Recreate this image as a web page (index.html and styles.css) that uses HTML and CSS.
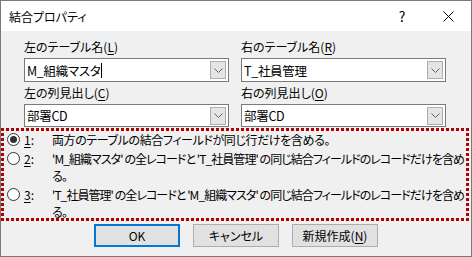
FILE: index.html
```html
<!DOCTYPE html>
<html>
  <head>
    <title>結合プロパティ</title>
    <link rel="stylesheet" href="styles.css">
  </head>
  <body>
    <div class="dialog">
      <div class="titlebar">
        <span class="title">結合プロパティ</span>
        <span class="tbtn">?</span>
        <span class="tbtn">
          <svg width="11" height="11" viewBox="0 0 11 11"><path d="M0.5 0.5 L10.5 10.5 M10.5 0.5 L0.5 10.5" stroke="#000" stroke-width="1" fill="none"/></svg>
        </span>
      </div>
      <div class="content">
        <div class="fields">
          <div class="label">左のテーブル名(<u>L</u>)</div>
          <div class="label">右のテーブル名(<u>R</u>)</div>
          <div class="combo">
            <span class="value">M_組織マスタ<span class="caret"></span></span>
            <span class="drop"><svg width="9" height="5" viewBox="0 0 9 5"><path d="M0.5 0.5 L4.5 4.5 L8.5 0.5" stroke="#606060" fill="none"/></svg></span>
          </div>
          <div class="combo">
            <span class="value">T_社員管理</span>
            <span class="drop"><svg width="9" height="5" viewBox="0 0 9 5"><path d="M0.5 0.5 L4.5 4.5 L8.5 0.5" stroke="#606060" fill="none"/></svg></span>
          </div>
          <div class="label">左の列見出し(<u>C</u>)</div>
          <div class="label">右の列見出し(<u>O</u>)</div>
          <div class="combo short">
            <span class="value">部署CD</span>
            <span class="drop"><svg width="9" height="5" viewBox="0 0 9 5"><path d="M0.5 0.5 L4.5 4.5 L8.5 0.5" stroke="#606060" fill="none"/></svg></span>
          </div>
          <div class="combo short">
            <span class="value">部署CD</span>
            <span class="drop"><svg width="9" height="5" viewBox="0 0 9 5"><path d="M0.5 0.5 L4.5 4.5 L8.5 0.5" stroke="#606060" fill="none"/></svg></span>
          </div>
        </div>

        <div class="joins">
          <div class="option">
            <span class="radio checked"></span>
            <span class="key"><u>1</u>:</span>
            <span class="desc">両方のテーブルの結合フィールドが同じ行だけを含める。</span>
          </div>
          <div class="option">
            <span class="radio"></span>
            <span class="key"><u>2</u>:</span>
            <span class="desc long">'M_組織マスタ' の全レコードと 'T_社員管理' の同じ結合フィールドのレコードだけを含め<br>る。</span>
          </div>
          <div class="option">
            <span class="radio"></span>
            <span class="key"><u>3</u>:</span>
            <span class="desc long">'T_社員管理' の全レコードと 'M_組織マスタ' の同じ結合フィールドのレコードだけを含め<br>る。</span>
          </div>
        </div>

        <div class="buttons">
          <div class="btn default">OK</div>
          <div class="btn">キャンセル</div>
          <div class="btn">新規作成(<u>N</u>)</div>
        </div>
      </div>
    </div>
  </body>
</html>
```

FILE: styles.css
```css
body {
  margin: 0;
  background-color: #f0f0f0;
  font-family: "Noto Sans CJK JP", "Noto Sans", sans-serif;
  font-size: 12px;
  color: #000;
}

u {
  text-decoration-thickness: 1px;
  text-underline-offset: 2px;
}

.dialog {
  width: 470px;
  height: 255px;
  border: 1px solid #7a7a7a;
  background-color: #f0f0f0;
  overflow: hidden;
}

.titlebar {
  height: 30px;
  background-color: #fff;
  display: flex;
  align-items: center;
}

.title {
  flex: 1;
  padding-left: 8px;
  font-feature-settings: "palt";
}

.tbtn {
  width: 46px;
  height: 30px;
  display: flex;
  align-items: center;
  justify-content: center;
  font-size: 14px;
}

.content {
  padding-top: 5px;
}

.fields {
  display: grid;
  grid-template-columns: 205px 205px;
  column-gap: 12px;
  padding-left: 23px;
}

.label {
  height: 22px;
  line-height: 21px;
  font-feature-settings: "palt";
}

.combo {
  height: 24px;
  box-sizing: border-box;
  border: 1px solid #7a7a7a;
  background-color: #fff;
  display: flex;
  align-items: center;
  padding: 0 2px 0 2px;
}

.combo.short {
  height: 23px;
}

.value {
  flex: 1;
  font-size: 12.5px;
  letter-spacing: -0.3px;
  font-feature-settings: "palt";
  display: flex;
  align-items: center;
}

.caret {
  width: 1px;
  height: 15px;
  background-color: #000;
  margin-left: 1px;
}

.drop {
  width: 16px;
  height: 18px;
  box-sizing: border-box;
  border: 1px solid #adadad;
  background-color: #e5e5e5;
  display: flex;
  align-items: center;
  justify-content: center;
}

.joins {
  margin: 1px 2px 0 0;
  height: 93px;
  box-sizing: border-box;
  padding: 3px 3px 0 3px;
  background:
    repeating-linear-gradient(90deg, #b00000 0 3px, transparent 3px 5px) top left / 100% 3px no-repeat,
    repeating-linear-gradient(90deg, #b00000 0 3px, transparent 3px 5px) bottom left / 100% 3px no-repeat,
    repeating-linear-gradient(180deg, #b00000 0 3px, transparent 3px 5px) top left / 3px 100% no-repeat,
    repeating-linear-gradient(180deg, #b00000 0 3px, transparent 3px 5px) top right / 3px 100% no-repeat;
  display: flex;
  flex-direction: column;
  gap: 2px;
}

.option {
  display: grid;
  grid-template-columns: 20px 28px 1fr;
  line-height: 17px;
}

.radio {
  width: 13px;
  height: 13px;
  box-sizing: border-box;
  border: 1px solid #333;
  border-radius: 50%;
  background-color: #fff;
  margin: 2px 0 0 3px;
  display: flex;
  align-items: center;
  justify-content: center;
}

.radio.checked::after {
  content: "";
  width: 7px;
  height: 7px;
  border-radius: 50%;
  background-color: #333;
}

.desc {
  white-space: nowrap;
  letter-spacing: -0.4px;
  font-feature-settings: "palt";
}

.desc.long {
  letter-spacing: -0.95px;
}

.buttons {
  display: flex;
  gap: 13px;
  padding-left: 93px;
  margin-top: 3px;
}

.btn {
  width: 86px;
  height: 23px;
  box-sizing: border-box;
  border: 1px solid #adadad;
  background-color: #e1e1e1;
  display: flex;
  align-items: center;
  justify-content: center;
  font-feature-settings: "palt";
}

.btn.default {
  border: 2px solid #0078d7;
}
```
